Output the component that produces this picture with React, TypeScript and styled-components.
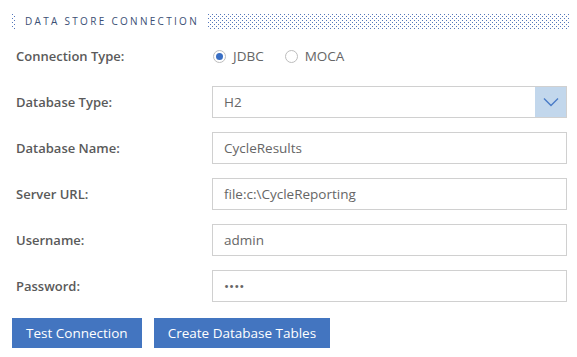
import { Fragment } from 'react';
import styled, { createGlobalStyle } from 'styled-components';

const GlobalStyle = createGlobalStyle`
  body {
    margin: 0;
    background: #ffffff;
    font-family: 'Open Sans', 'Liberation Sans', sans-serif;
  }
`;

const Panel = styled.div`
  padding: 14px 10px 0 12px;
  width: 577px;
  box-sizing: border-box;
`;

const Dots = styled.div<{ $grow?: boolean }>`
  height: 15px;
  width: ${(p) => (p.$grow ? 'auto' : '3px')};
  flex: ${(p) => (p.$grow ? '1' : 'none')};
  background-image: conic-gradient(at 1px 1px, transparent 75%, #5577bb 0),
    conic-gradient(at 1px 1px, transparent 75%, #5577bb 0);
  background-size: 4px 4px;
  background-position: 0 0, 2px 2px;
`;

const Header = styled.div`
  display: flex;
  align-items: center;
  gap: 9px;
  margin-bottom: 11px;
  margin-right: -3px;
`;

const Title = styled.span`
  font-size: 10px;
  letter-spacing: 2.3px;
  color: #3b4f75;
  text-transform: uppercase;
  line-height: 15px;
  margin-left: 1px;
`;

const Form = styled.div`
  display: grid;
  grid-template-columns: 200px 1fr;
  row-gap: 14px;
  align-items: center;
`;

const Label = styled.div`
  padding-left: 4px;
  font-size: 13px;
  font-weight: 600;
  color: #5a5a5a;
`;

const Field = styled.div`
  height: 32px;
  box-sizing: border-box;
  border: 1px solid #d0d0d0;
  display: flex;
  align-items: center;
  padding-left: 11px;
  font-size: 13.5px;
  color: #666666;
`;

const SelectField = styled(Field)`
  padding-right: 0;
  justify-content: space-between;
`;

const Chevron = styled.div`
  width: 31px;
  height: 30px;
  background: #c2d7ec;
  display: flex;
  align-items: center;
  justify-content: center;
`;

const RadioGroup = styled.div`
  height: 32px;
  display: flex;
  align-items: center;
  gap: 21px;
  padding-left: 1px;
`;

const RadioOption = styled.label`
  display: flex;
  align-items: center;
  gap: 7px;
  font-size: 13.5px;
  color: #666666;
`;

const RadioCircle = styled.span<{ $checked?: boolean }>`
  width: 13px;
  height: 13px;
  box-sizing: border-box;
  border-radius: 50%;
  border: 1px solid #bdbdbd;
  display: flex;
  align-items: center;
  justify-content: center;
  &::after {
    content: '';
    width: 7px;
    height: 7px;
    border-radius: 50%;
    background: ${(p) => (p.$checked ? '#3a6fc4' : 'transparent')};
  }
`;

const Buttons = styled.div`
  display: flex;
  gap: 12px;
  margin-top: 16px;
`;

const Button = styled.button`
  height: 30px;
  padding: 0 14px;
  background: #4375c0;
  color: #ffffff;
  border: none;
  font-family: 'Open Sans', 'Liberation Sans', sans-serif;
  font-size: 13.5px;
  cursor: pointer;
`;

const fields = [
  { label: 'Database Name:', value: 'CycleResults' },
  { label: 'Server URL:', value: 'file:c:\\CycleReporting' },
  { label: 'Username:', value: 'admin' },
  { label: 'Password:', value: '••••' }
];

export default function App() {
  return (
    <>
      <GlobalStyle />
      <Panel>
        <Header>
          <Dots />
          <Title>Data Store Connection</Title>
          <Dots $grow />
        </Header>
        <Form>
          <Label>Connection Type:</Label>
          <RadioGroup>
            <RadioOption>
              <RadioCircle $checked />
              JDBC
            </RadioOption>
            <RadioOption>
              <RadioCircle />
              MOCA
            </RadioOption>
          </RadioGroup>
          <Label>Database Type:</Label>
          <SelectField>
            H2
            <Chevron>
              <svg width="16" height="10" viewBox="0 0 16 10">
                <path d="M1 1.5 L8 8.5 L15 1.5" fill="none" stroke="#4a7cc7" strokeWidth="1.4" />
              </svg>
            </Chevron>
          </SelectField>
          {fields.map((f) => (
            <Fragment key={f.label}>
              <Label>{f.label}</Label>
              <Field>{f.value}</Field>
            </Fragment>
          ))}
        </Form>
        <Buttons>
          <Button>Test Connection</Button>
          <Button>Create Database Tables</Button>
        </Buttons>
      </Panel>
    </>
  );
}
